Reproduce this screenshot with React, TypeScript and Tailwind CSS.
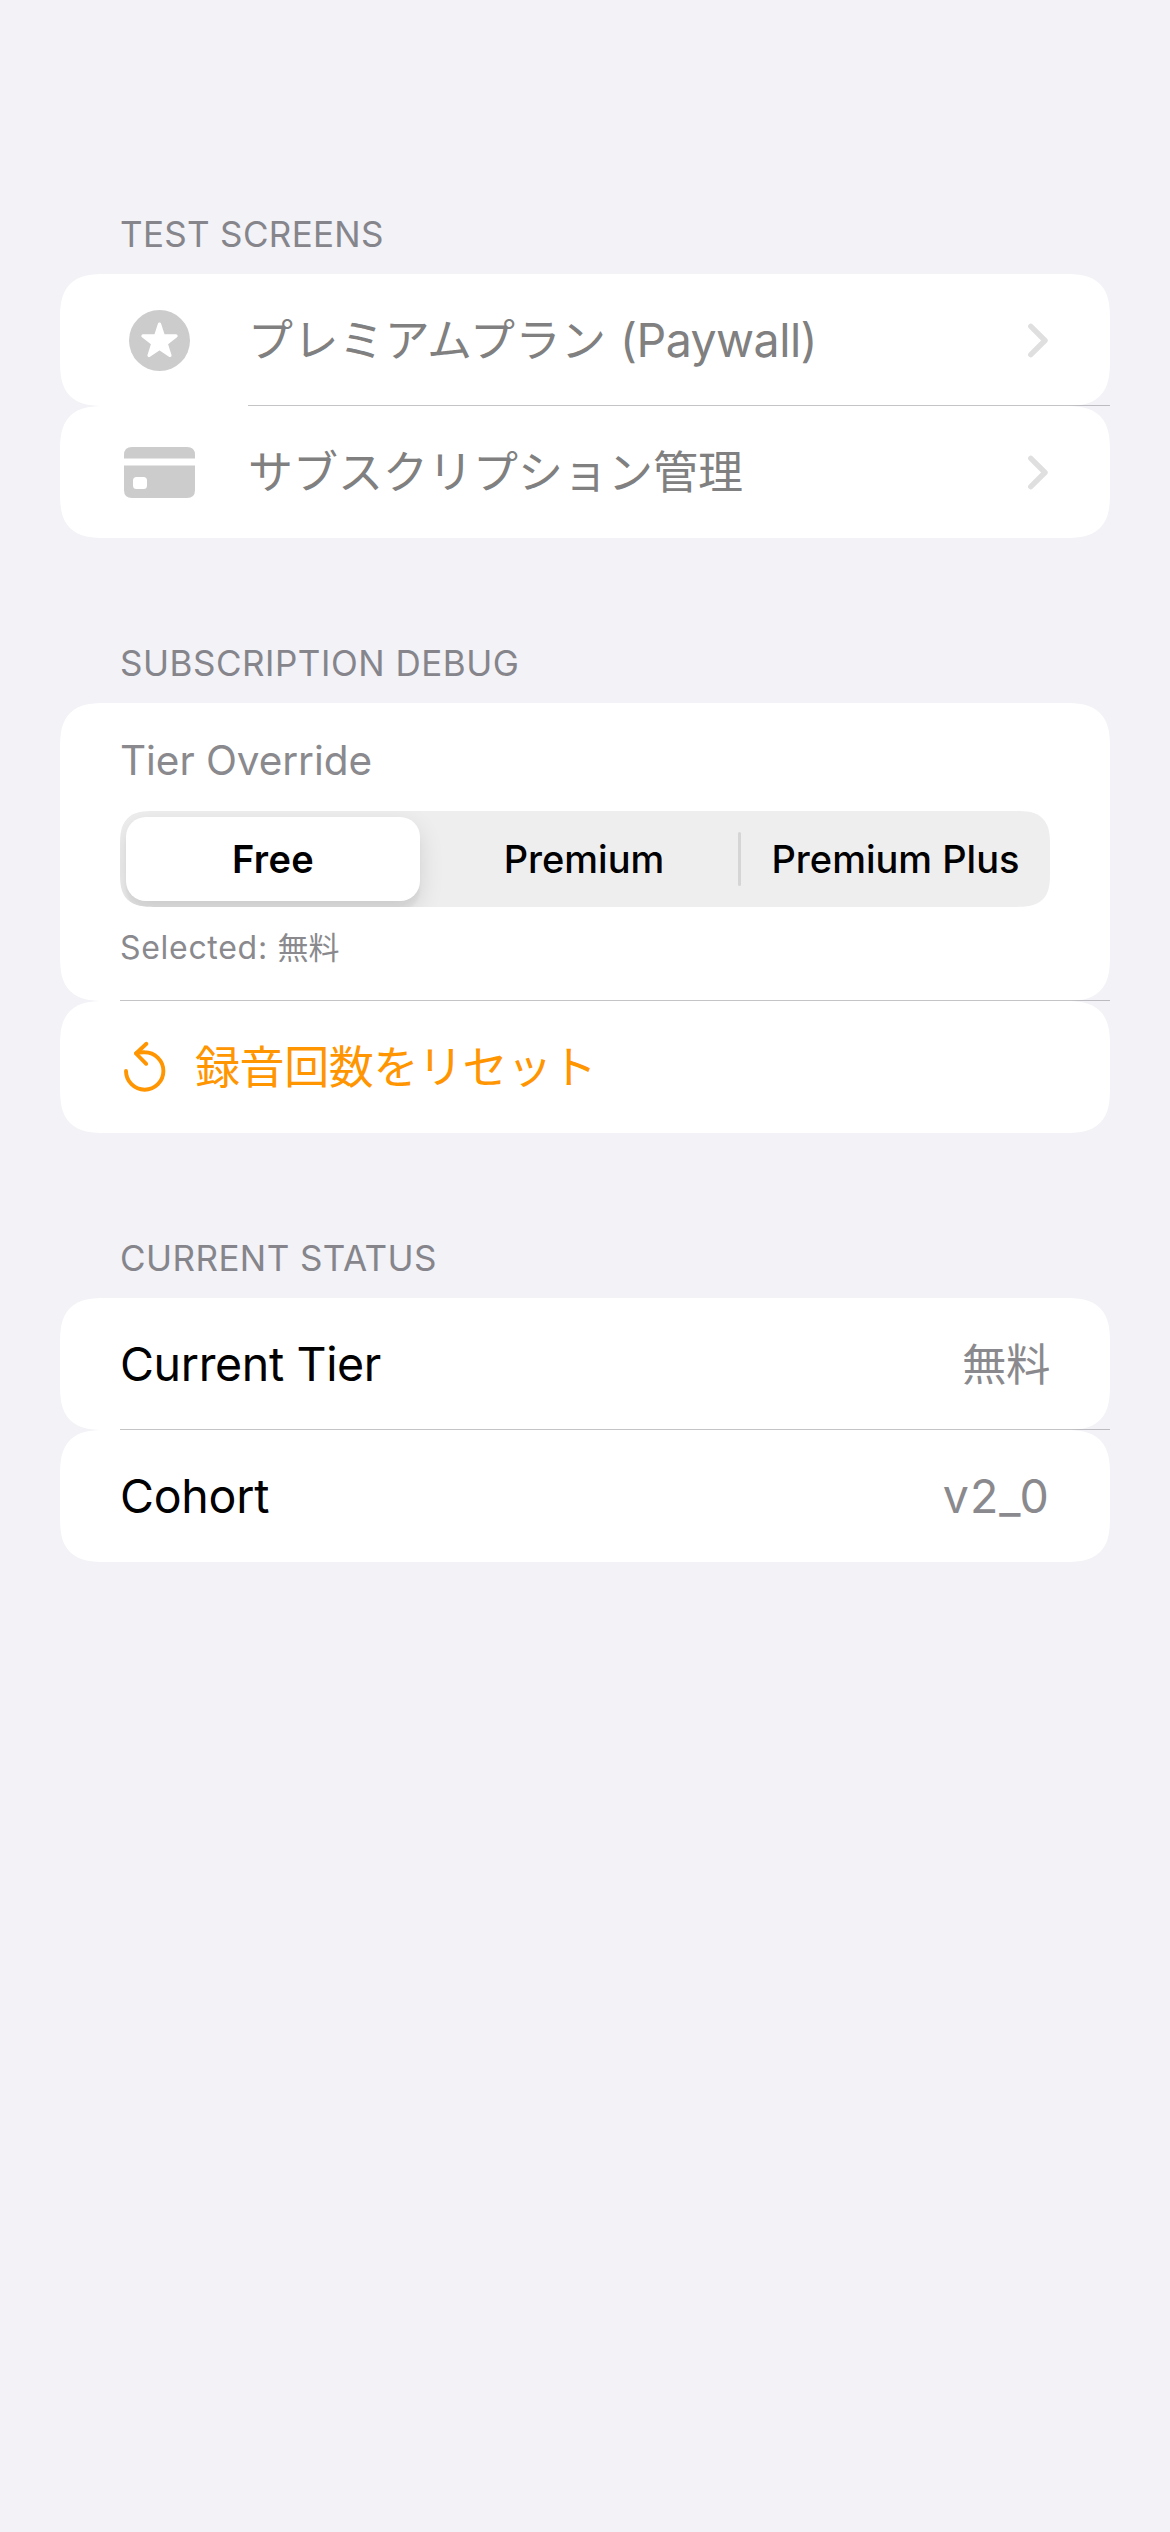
import type { ReactNode } from "react";

const FONT = "font-['Inter','Noto_Sans_CJK_JP',sans-serif]";

function StarCircleIcon() {
  return (
    <svg className="h-[61px] w-[61px]" viewBox="0 0 61 61">
      <circle cx="30.5" cy="30.5" r="30.5" fill="#cccccc" />
      <path
        d="M30.5 14.2 L34.3 26 L47 26 L37.1 33.6 L40.9 45.4 L30.5 38.3 L20.1 45.4 L23.9 33.6 L14 26 L26.7 26 Z"
        fill="#ffffff"
        stroke="#ffffff"
        strokeWidth="3.4"
        strokeLinejoin="round"
      />
    </svg>
  );
}

function CreditCardIcon() {
  return (
    <svg className="h-[51px] w-[71px]" viewBox="0 0 71 51">
      <path d="M0 11.5 V8 Q0 0 8 0 H63 Q71 0 71 8 V11.5 Z" fill="#cccccc" />
      <path
        fillRule="evenodd"
        d="M0 18.5 H71 V43 Q71 51 63 51 H8 Q0 51 0 43 Z M12.5 30 Q9 30 9 33.5 V38.5 Q9 42 12.5 42 H19.5 Q23 42 23 38.5 V33.5 Q23 30 19.5 30 Z"
        fill="#cccccc"
      />
    </svg>
  );
}

function ChevronIcon() {
  return (
    <svg className="mr-[2px] h-[35px] w-[20px]" viewBox="0 0 20 35">
      <path
        d="M2.8 3.3 L17 17.5 L2.8 31.7"
        fill="none"
        stroke="#dfdfdf"
        strokeWidth="5.4"
        strokeLinecap="round"
        strokeLinejoin="round"
      />
    </svg>
  );
}

function ResetIcon() {
  return (
    <svg className="h-[52px] w-[44px]" viewBox="0 0 44 52">
      <g fill="none" stroke="#ff9500" strokeWidth="3.9" strokeLinecap="round" strokeLinejoin="round">
        <path d="M4 30 A18.7 18.7 0 1 0 22.7 11.3 Q18 11.1 14 12.3" />
        <path d="M24.4 2.8 L14 12.5 L24.2 22.8" />
      </g>
    </svg>
  );
}

function Header({ children }: { children: ReactNode }) {
  return <h2 className="mb-[19px] ml-[60px] h-[42px] text-[35px] leading-[42px] text-[#85858b]">{children}</h2>;
}

function Card({ children, className = "" }: { children: ReactNode; className?: string }) {
  return (
    <div
      className={`relative rounded-[34px] bg-white supports-[corner-shape:squircle]:rounded-[46px] supports-[corner-shape:squircle]:[corner-shape:superellipse(1.5)] ${className}`}
    >
      {children}
    </div>
  );
}

const ROW = "flex h-[132px] items-center px-[60px] text-[46.5px] leading-[132px]";

function Separator({ className }: { className: string }) {
  return <div className={`absolute right-0 bottom-0 h-px bg-[#3c3c43]/30 ${className}`} />;
}

export default function App() {
  return (
    <main className={`flex min-h-[2532px] w-full flex-col bg-[#f2f2f7] px-[60px] pt-[213px] text-black ${FONT}`}>
      <section>
        <Header>
          <span className="tracking-[0.32px]">TEST SCREENS</span>
        </Header>
        <Card className={ROW}>
          <div className="flex w-[128px] pl-[9px]">
            <StarCircleIcon />
          </div>
          <p className="flex-1 whitespace-pre text-[#808080]">
            <span className="mr-[1px] text-[45px] leading-none tracking-[0.55px]">プレミアムプラン</span>
            <span className="leading-none tracking-[-0.55px]"> (Paywall)</span>
          </p>
          <ChevronIcon />
          <Separator className="left-[188px]" />
        </Card>
        <Card className={ROW}>
          <div className="flex w-[128px] pl-[4px]">
            <CreditCardIcon />
          </div>
          <p className="flex-1 text-[#808080]">
            <span className="text-[45px] leading-none">サブスクリプション管理</span>
          </p>
          <ChevronIcon />
        </Card>
      </section>

      <section className="mt-[104px]">
        <Header>
          <span className="tracking-[0.52px]">SUBSCRIPTION DEBUG</span>
        </Header>
        <Card className="h-[298px] px-[60px] pt-[34px]">
          <p className="h-[48px] text-[40.5px] leading-[48px] tracking-[-0.06px] text-[#8a8a8e]">Tier Override</p>
          <div className="mt-[26px] flex h-[96px] items-center overflow-hidden rounded-[25px] bg-[#eeeeee] text-[38px] leading-[96px] font-medium supports-[corner-shape:squircle]:rounded-[34px] supports-[corner-shape:squircle]:[corner-shape:superellipse(1.5)]">
            <div className="flex h-full w-[310px] items-center pl-[6px]">
              <div className="flex h-[84px] w-[294px] items-center justify-center rounded-[20px] bg-white font-semibold tracking-[0.3px] shadow-[0_9px_24px_rgba(0,0,0,0.12),0_9px_3px_rgba(0,0,0,0.04)]">
                Free
              </div>
            </div>
            <div className="w-[308px] text-center">Premium</div>
            <div className="h-[54px] w-[3px] rounded-full bg-[#d5d5d7]" />
            <div className="flex-1 text-center">Premium Plus</div>
          </div>
          <p className="mt-[21px] h-[40px] text-[32px] leading-[40px] whitespace-pre text-[#8a8a8e]">
            <span className="tracking-[0.7px]">Selected: </span>
            <span className="text-[31px] leading-none">無料</span>
          </p>
          <Separator className="left-[60px]" />
        </Card>
        <Card className={ROW}>
          <div className="-mt-[1px] flex w-[75px] pl-[2px]">
            <ResetIcon />
          </div>
          <p className="text-[#ff9500]">
            <span className="text-[45px] leading-none tracking-[-0.4px]">録音回数をリセット</span>
          </p>
        </Card>
      </section>

      <section className="mt-[104px]">
        <Header>
          <span className="tracking-[0.43px]">CURRENT STATUS</span>
        </Header>
        <Card className={`${ROW} justify-between`}>
          <span className="tracking-[-0.35px]">Current Tier</span>
          <p className="text-[#8a8a8e]">
            <span className="text-[44.5px] leading-none tracking-[-0.5px]">無料</span>
          </p>
          <Separator className="left-[60px]" />
        </Card>
        <Card className={`${ROW} justify-between`}>
          <span className="tracking-[-0.25px]">Cohort</span>
          <span className="tracking-[1.1px] text-[#8a8a8e]">v2_0</span>
        </Card>
      </section>
    </main>
  );
}
